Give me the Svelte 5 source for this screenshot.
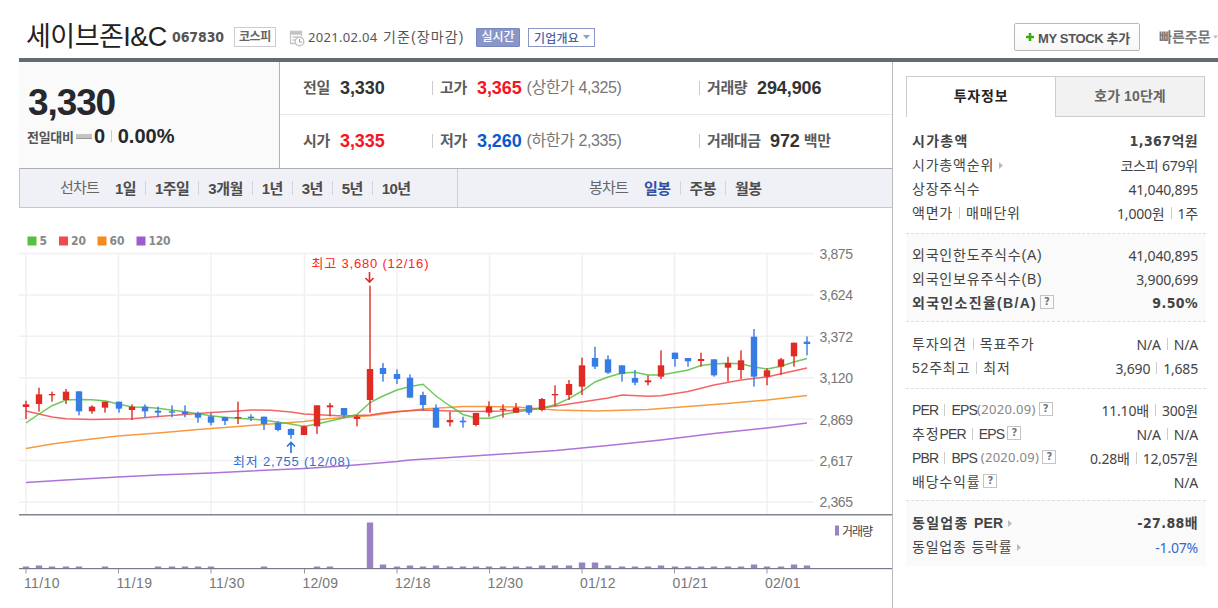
<script lang="ts">
	type Range = { label: string; active?: boolean };
	type Row = {
		label: string[];
		value: string[];
		note?: string;
		help?: boolean;
		arrow?: boolean;
		strong?: boolean;
		down?: boolean;
	};
	type Group = { shaded: boolean; top: number; bottom: number; rows: Row[] };

	const lineRanges = ['1일', '1주일', '3개월', '1년', '3년', '5년', '10년'];
	const candleRanges: Range[] = [
		{ label: '일봉', active: true },
		{ label: '주봉' },
		{ label: '월봉' },
	];

	const groups: Group[] = [
		{
			shaded: false,
			top: 12,
			bottom: 8,
			rows: [
				{ label: ['시가총액'], value: ['1,367억원'], strong: true },
				{ label: ['시가총액순위'], value: ['코스피 679위'], arrow: true },
				{ label: ['상장주식수'], value: ['41,040,895'] },
				{ label: ['액면가', '매매단위'], value: ['1,000원', '1주'] },
			],
		},
		{
			shaded: true,
			top: 9,
			bottom: 6,
			rows: [
				{ label: ['외국인한도주식수(A)'], value: ['41,040,895'] },
				{ label: ['외국인보유주식수(B)'], value: ['3,900,699'] },
				{ label: ['외국인소진율(B/A)'], value: ['9.50%'], help: true, strong: true },
			],
		},
		{
			shaded: false,
			top: 10,
			bottom: 8,
			rows: [
				{ label: ['투자의견', '목표주가'], value: ['N/A', 'N/A'] },
				{ label: ['52주최고', '최저'], value: ['3,690', '1,685'] },
			],
		},
		{
			shaded: false,
			top: 9,
			bottom: 6,
			rows: [
				{ label: ['PER', 'EPS'], value: ['11.10배', '300원'], note: '(2020.09)', help: true },
				{ label: ['추정PER', 'EPS'], value: ['N/A', 'N/A'], help: true },
				{ label: ['PBR', 'BPS'], value: ['0.28배', '12,057원'], note: ' (2020.09)', help: true },
				{ label: ['배당수익률'], value: ['N/A'], help: true },
			],
		},
		{
			shaded: true,
			top: 10,
			bottom: 7,
			rows: [
				{ label: ['동일업종 PER'], value: ['-27.88배'], arrow: true, strong: true },
				{ label: ['동일업종 등락률'], value: ['-1.07%'], arrow: true, down: true },
			],
		},
	];

	// high, body top, body bottom, low (thirds of a pixel below the chart origin), 1 = up
	const candles = [
		[527, 538, 546, 582, 1], [488, 508, 537, 560, 1], [500, 507, 511, 530, 1], [492, 500, 525, 537, 1],
		[499, 499, 559, 571, 0], [541, 545, 559, 566, 1], [530, 530, 548, 563, 1], [530, 530, 551, 563, 0],
		[538, 545, 555, 585, 1], [538, 545, 559, 577, 0], [545, 557, 563, 577, 0], [541, 559, 563, 577, 0],
		[541, 560, 567, 577, 0], [560, 564, 578, 593, 0], [563, 574, 593, 601, 0], [575, 576, 588, 600, 0],
		[530, 576, 580, 597, 1], [568, 575, 579, 588, 0], [575, 575, 597, 615, 0], [589, 593, 615, 619, 0],
		[610, 612, 630, 641, 0], [601, 604, 630, 630, 1], [541, 541, 604, 627, 1], [534, 541, 547, 574, 1],
		[549, 549, 570, 577, 0], [570, 575, 582, 604, 1], [182, 432, 525, 563, 1], [414, 429, 447, 470, 0],
		[433, 447, 462, 477, 0], [448, 458, 518, 518, 0], [500, 510, 540, 558, 0], [538, 549, 608, 608, 0],
		[560, 585, 592, 604, 1], [575, 587, 592, 608, 0], [564, 564, 600, 604, 1], [529, 545, 563, 575, 1],
		[538, 551, 555, 578, 1], [534, 548, 563, 563, 1], [541, 541, 563, 570, 0], [519, 522, 555, 559, 1],
		[481, 507, 511, 543, 1], [465, 477, 510, 525, 1], [398, 421, 485, 510, 1], [365, 399, 425, 432, 0],
		[391, 403, 443, 447, 0], [421, 421, 447, 470, 0], [435, 459, 473, 481, 0], [451, 466, 472, 481, 1],
		[376, 421, 455, 462, 1], [383, 383, 402, 425, 0], [399, 399, 409, 425, 0], [383, 402, 408, 425, 1],
		[403, 403, 451, 455, 0], [395, 414, 428, 470, 1], [376, 406, 435, 462, 1], [312, 335, 455, 485, 0],
		[430, 436, 455, 481, 1], [399, 403, 425, 450, 1], [353, 353, 394, 425, 1], [334, 350, 357, 391, 0],
	];

	const volumes = [
		2, 3, 2, 2, 2, 0, 2, 0, 0, 0, 2, 2, 2, 2, 2, 0, 0, 0, 2, 0,
		0, 0, 2, 2, 0, 0, 46, 4, 2, 3, 2, 3, 2, 2, 2, 2, 2, 2, 2, 3,
		3, 3, 6, 6, 3, 2, 2, 2, 3, 2, 2, 2, 2, 2, 2, 4, 2, 2, 4, 3,
	];

	const averages = [
		{
			days: 120,
			color: '#a05bd0',
			points:
				'26,482.5 66,480 118,477 158,475 211,473 251,471 304,468.5 343,466 397,461.5 410,460 450,457.5 503,454 556,450.5 608,445.5 661,440 714,433.5 767,428 807,423',
		},
		{
			days: 60,
			color: '#f58a1f',
			points:
				'26,448.5 52,444 79,440.5 118,436 158,433 198,429.5 238,426.5 264,424.5 304,421.5 330,418.5 370,415.8 397,412 423,409 463,406.5 490,406.5 516,407 556,410 595,411 648,409.5 688,406.5 727,403.5 767,400 807,395.5',
		},
		{
			days: 20,
			color: '#f04a4a',
			points:
				'26,411 39,414 52,417 66,418.7 92,419.5 132,418.7 158,416.5 185,414.5 211,412.5 238,411 251,410 271,410.2 291,412 304,414 343,416 357,415.5 370,415 383,413 397,411.5 423,410 450,411 476,411.5 503,411 530,409.5 556,406 582,402 608,398 622,395 648,396.2 661,395.7 688,391.5 714,385 741,380 767,377 780,374 807,368',
		},
		{
			days: 5,
			color: '#56c040',
			points:
				'26,423 39,414 52,405.7 66,400 79,399.5 92,399.7 106,401 118,404 132,407 145,407.3 158,408.3 171,410 185,411.7 198,413.7 211,415.7 224,417.3 238,418.3 251,419 264,420.3 277,422 291,424 304,426.5 317,424 330,421 343,418 357,414.5 370,402.5 383,396 397,390 410,386.5 423,384.3 436,396 450,406 463,414.5 476,418 490,418.3 503,414.5 516,412 530,410 542,408 556,404.5 569,398.7 582,391 595,382 608,377 622,373 635,372.3 648,375 661,375 675,372.5 688,370 701,365.5 714,364 727,363.3 741,363.8 754,367 767,369 780,366.5 794,362 807,358.5',
		},
	];

	const legend = [
		{ days: 5, x: 27.5, color: '#56c040', width: 8 },
		{ days: 20, x: 59, color: '#f04a4a', width: 15 },
		{ days: 60, x: 97.5, color: '#f58a1f', width: 15 },
		{ days: 120, x: 136.5, color: '#a05bd0', width: 22 },
	];

	const prices = ['3,875', '3,624', '3,372', '3,120', '2,869', '2,617', '2,365'];
	const dates = ['11/10', '11/19', '11/30', '12/09', '12/18', '12/30', '01/12', '01/21', '02/01'];

	const gridY = (i: number) => 253.5 + i * 41.4;
	const gridX = (i: number) => [26, 118.5, 211, 304.5, 397, 489.5, 582, 674.5, 767][i];
	const slot = (i: number) => Math.round(26 + i * 13.237);
	const py = (v: number) => 225 + v / 3;

	// split off ratio names (PER, EPS, ...) so they can be set tighter than the Hangul
	const runs = (s: string) => s.split(/([A-Z]{3})/).filter(Boolean);
	const isLatin = (s: string) => /^[A-Z]{3}$/.test(s);
</script>

<div class="page">
	<header>
		<h1>세이브존I&amp;C</h1>
		<span class="code">067830</span>
		<span class="market">코스피</span>
		<svg class="clock" width="16" height="17" viewBox="0 0 16 17" fill="none" stroke="#c4c4c4">
			<path d="M7 13.5H1.5V1.5h11v5M1.5 4h11M3.500 7h6M3.500 10h3" stroke-width="1.3" />
			<path d="M2 3h10" stroke-width="2" />
			<circle cx="10.500" cy="11.500" r="4.300" fill="#fff" stroke-width="1.5" />
			<path d="M10.500 9v3h2.500" stroke="#999" />
		</svg>
		<span class="date">2021.02.04</span>
		<span class="basis">기준(장마감)</span>
		<span class="realtime">실시간</span>
		<button class="overview" type="button">
			기업개요<svg width="7" height="4" viewBox="0 0 7 4"><path d="M0 0h7L3.500 4z" fill="#8d9dcb" /></svg>
		</button>
		<button class="mystock" type="button">
			<svg width="8" height="8" viewBox="0 0 8 8"><path d="M4 0v8M0 4h8" stroke="#35ad12" stroke-width="2.600" /></svg>
			<span>MY STOCK 추가</span>
		</button>
		<span class="order">빠른주문</span>
		<svg class="order-arrow" width="7" height="4" viewBox="0 0 7 4"><path d="M0 0h7L3.500 4z" fill="#bbb" /></svg>
	</header>

	<div class="body">
		<main>
			<section class="quote">
				<div class="today">
					<strong>3,330</strong>
					<div class="change">
						<span class="vs">전일대비</span>
						<i class="flat"></i>
						<b>0</b>
						<i class="bar"></i>
						<b class="rate">0.00%</b>
					</div>
				</div>
				<div class="detail">
					<div class="line">
						<div class="cell first"><em>전일</em><b>3,330</b></div>
						<div class="cell mid"><em>고가</em><b class="up">3,365</b><small>(상한가 4,325)</small></div>
						<div class="cell"><em>거래량</em><b>294,906</b></div>
					</div>
					<div class="line">
						<div class="cell first"><em>시가</em><b class="up">3,335</b></div>
						<div class="cell mid"><em>저가</em><b class="down">3,260</b><small>(하한가 2,335)</small></div>
						<div class="cell"><em class="amount">거래대금</em><b>972</b><em class="unit">백만</em></div>
					</div>
				</div>
			</section>

			<nav>
				<div class="ranges line-chart">
					<span class="caption">선차트</span>
					<ul>
						{#each lineRanges as range}
							<li>{range}</li>
						{/each}
					</ul>
				</div>
				<div class="ranges candle-chart">
					<span class="caption">봉차트</span>
					<ul>
						{#each candleRanges as range}
							<li class:active={range.active}>{range.label}</li>
						{/each}
					</ul>
				</div>
			</nav>

			<svg class="chart" width="873" height="400" viewBox="19 208 873 400">
				{#each legend as item}
					<rect x={item.x} y="236.500" width="9" height="9" fill={item.color} />
					<text class="legend" x={item.x + 12} y="245.300" textLength={item.width}>{item.days}</text>
				{/each}

				<g stroke="#f0f0f0" stroke-width="1.500">
					{#each prices as _, i}
						<path d="M19 {gridY(i)}H814" />
					{/each}
					{#each dates as _, i}
						<path d="M{gridX(i)} 253V514" />
					{/each}
				</g>

				{#each averages as line}
					<polyline points={line.points} fill="none" stroke={line.color} stroke-width="1.500" stroke-opacity="0.850" />
				{/each}

				{#each candles as [high, top, bottom, low, up], i}
					<g fill={up ? '#e02b24' : '#377be4'}>
						<rect x={slot(i) - 0.7} y={py(high)} width="1.400" height={(low - high) / 3} />
						<rect x={slot(i) - 3.2} y={py(top)} width="6.400" height={(bottom - top) / 3} />
					</g>
				{/each}

				<text class="mark" x="311.500" y="267.500" textLength="117" fill="#f22">최고 3,680 (12/16)</text>
				<path d="M369.500 272v9.500M365.500 278l4 4 4-4" stroke="#e02b24" stroke-width="1.600" fill="none" />
				<text class="mark" x="233" y="466" textLength="117" fill="#2673d6">최저 2,755 (12/08)</text>
				<path d="M291 453v-10M287 446.500l4-4 4 4" stroke="#2673d6" stroke-width="1.600" fill="none" />

				{#each prices as price, i}
					<text class="axis" x="819.500" y={gridY(i) + 5.5} textLength="33.500">{price}</text>
				{/each}

				<rect x="19" y="514" width="873" height="1.500" fill="#80848c" />
				{#each volumes as v, i}
					{#if v}
						<rect x={slot(i) - 3.2} y={568.5 - v} width="6.400" height={v} fill="#9a81c3" />
					{/if}
				{/each}
				<rect x="19" y="568" width="873" height="1.200" fill="#777a88" />
				{#each dates as date, i}
					<path d="M{gridX(i)} 569v4.500" stroke="#999" />
					<text class="axis" x={gridX(i) - 2} y="587.500" textLength="35.500">{date}</text>
				{/each}
				<rect x="835" y="525.500" width="4" height="10" fill="#9a81c3" />
				<text class="volume" x="842" y="535.500" textLength="31">거래량</text>
			</svg>
		</main>

		<aside>
			<div class="tabs">
				<div class="tab current">투자정보</div>
				<div class="tab">호가 10단계</div>
			</div>
			{#each groups as group}
				<div
					class="group"
					class:shaded={group.shaded}
					style="padding-top: {group.top}px; padding-bottom: {group.bottom}px"
				>
					{#each group.rows as row}
						<div class="row" class:strong={row.strong} class:down={row.down}>
							<div class="label">
								{#each row.label as part, i}
									{#if i > 0}<i class="bar"></i>{/if}<span>{#each runs(part) as run}<span class:latin={isLatin(run)}>{run}</span>{/each}</span>
								{/each}
								{#if row.note}<span class="note">{row.note}</span>{/if}
								{#if row.help}<span class="help">?</span>{/if}
								{#if row.arrow}
									<svg width="4" height="7" viewBox="0 0 4 7"><path d="M0 0l4 3.500L0 7z" fill="#bbb" /></svg>
								{/if}
							</div>
							<div class="value">
								{#each row.value as part, i}
									{#if i > 0}<i class="bar"></i>{/if}<span>{part}</span>
								{/each}
							</div>
						</div>
					{/each}
				</div>
			{/each}
		</aside>
	</div>
</div>

<style>
	:global(body) {
		background: #fff;
		overflow: hidden;
	}

	.page {
		width: 1218px;
		height: 608px;
		overflow: hidden;
		box-sizing: border-box;
		padding-left: 19px;
		font-family: 'Liberation Sans', 'Noto Sans CJK KR', sans-serif;
		color: #444;
		white-space: nowrap;
	}

	.page :global(*) {
		box-sizing: border-box;
	}

	header {
		display: flex;
		align-items: center;
		height: 62px;
		padding: 16px 0 0 7px;
		border-bottom: 4px solid #646a75;
	}

	h1 {
		width: 146px;
		margin: 0;
		font-size: 27px;
		font-weight: 400;
		line-height: 30px;
		letter-spacing: -0.5px;
		color: #222;
	}

	.code {
		width: 62px;
		font: 700 14px/20px 'DejaVu Sans Condensed', 'DejaVu Sans', sans-serif;
		letter-spacing: -0.1px;
		color: #555;
	}

	.market {
		width: 42px;
		height: 20px;
		border: 1px solid #ccc;
		font-size: 12px;
		font-weight: 700;
		line-height: 18px;
		letter-spacing: -0.3px;
		text-align: center;
		color: #666;
	}

	.clock {
		margin: 3px 3px 0 13px;
	}

	.date {
		width: 75px;
		font: 13px/20px 'Noto Sans', sans-serif;
		letter-spacing: 0.3px;
		color: #555;
	}

	.basis {
		width: 93px;
		font-size: 14px;
		line-height: 20px;
		letter-spacing: 1.1px;
		color: #555;
	}

	.realtime {
		width: 44px;
		height: 19px;
		margin-right: 8px;
		border: 1px solid #7787bd;
		border-radius: 1px;
		background: #8996c8;
		font-size: 12px;
		font-weight: 500;
		line-height: 17px;
		text-align: center;
		color: #fff;
	}

	button {
		display: flex;
		align-items: center;
		padding: 0;
		font-family: inherit;
		white-space: nowrap;
	}

	.overview {
		gap: 4px;
		width: 67px;
		height: 19px;
		padding-left: 5px;
		border: 1px solid #8997c8;
		background: #fff;
		font-size: 12px;
		font-weight: 500;
		letter-spacing: 0.2px;
		color: #4a5fa8;
	}

	.mystock {
		gap: 4px;
		width: 126px;
		height: 28px;
		margin: 0 19px 0 auto;
		padding-left: 11px;
		border: 1px solid #b8b8b8;
		border-radius: 2px;
		background: linear-gradient(#fff, #f7f7f7);
		font-size: 13px;
		font-weight: 700;
		letter-spacing: -0.35px;
		color: #555;
	}

	.order {
		width: 54px;
		font-size: 14px;
		font-weight: 700;
		line-height: 20px;
		color: #777;
	}

	.order-arrow {
		flex-shrink: 0;
		width: 5px;
	}

	.body {
		display: flex;
		height: 546px;
	}

	main {
		width: 874px;
		border-right: 1px solid #bbb;
	}

	.quote {
		display: flex;
		height: 106px;
	}

	.today {
		width: 261px;
		padding: 19px 0 0 8px;
		border-right: 1px solid #b0b2b8;
		background: #fafafa;
		color: #26282b;
	}

	.today strong {
		display: block;
		padding-left: 1px;
		font-size: 37px;
		line-height: 44px;
		letter-spacing: -1.1px;
	}

	.change {
		display: flex;
		align-items: center;
		height: 22px;
	}

	.vs {
		width: 49px;
		font-size: 13px;
		font-weight: 700;
		letter-spacing: -0.3px;
		color: #555;
	}

	.flat {
		width: 16px;
		height: 5px;
		margin-right: 2px;
		border-bottom: 1px solid #999;
		background: #c3c3c3;
	}

	.change b {
		font-size: 20px;
		letter-spacing: -0.4px;
	}

	.change .rate {
		letter-spacing: 0;
	}

	.bar {
		flex-shrink: 0;
		width: 1px;
		height: 12px;
		margin: 0 6px;
		background: #ccc;
	}

	.detail {
		flex: 1;
	}

	.line {
		display: flex;
		align-items: center;
		height: 52px;
	}

	.line + .line {
		height: 53px;
		border-top: 1px solid #e8e8e8;
	}

	.cell {
		display: flex;
		align-items: center;
		height: 14px;
		padding-left: 7px;
		border-left: 1px solid #ccc;
		line-height: 20px;
	}

	.cell.first {
		width: 152px;
		padding-left: 22px;
		border-color: transparent;
	}

	.cell.mid {
		width: 267px;
	}

	.cell em {
		width: 37px;
		font-size: 15px;
		font-style: normal;
		font-weight: 700;
		letter-spacing: -0.4px;
		color: #5c5c5c;
	}

	.cell:last-child em {
		width: 50px;
	}

	.cell em.amount {
		width: 63px;
	}

	.cell:last-child em.unit {
		width: auto;
		margin-left: 4px;
	}

	.cell b {
		font-size: 18px;
		letter-spacing: -0.1px;
		color: #333;
	}

	.cell b.up {
		color: #f81420;
	}

	.cell b.down {
		color: #0a59d2;
	}

	.cell small {
		margin-left: 5px;
		font-size: 16px;
		letter-spacing: -0.4px;
		color: #777;
	}

	nav {
		display: flex;
		height: 40px;
		border: 1px solid #c5c7ce;
		border-top-color: #aaadb3;
		border-right: 0;
		background: #f0f1f6;
	}

	.ranges {
		display: flex;
		align-items: center;
	}

	.line-chart {
		width: 438px;
		padding-left: 40px;
		border-right: 1px solid #cccfd8;
	}

	.candle-chart {
		padding-left: 131px;
	}

	.caption {
		width: 46px;
		font-size: 15px;
		line-height: 20px;
		letter-spacing: -0.8px;
		color: #666;
	}

	ul {
		display: flex;
		margin: 0;
		padding: 0;
		list-style: none;
	}

	li {
		height: 14px;
		padding: 0 9px;
		border-left: 1px solid #d2d4da;
		font-size: 15px;
		font-weight: 700;
		line-height: 15px;
		letter-spacing: -0.55px;
		color: #4c4c4c;
	}

	li:first-child {
		border-left: 0;
	}

	li.active {
		color: #334fa4;
	}

	.chart {
		display: block;
	}

	.legend {
		font: 700 12px 'DejaVu Sans Condensed', 'DejaVu Sans', sans-serif;
		fill: #888;
	}

	.mark {
		font: 13px 'Liberation Sans', 'Noto Sans CJK KR', sans-serif;
	}

	.axis {
		font: 14px 'Liberation Sans', sans-serif;
		fill: #777;
	}

	.volume {
		font: 12px 'Noto Sans CJK KR', sans-serif;
		fill: #444;
	}

	aside {
		width: 325px;
		padding: 14px 12px 0 13px;
	}

	.tabs {
		display: flex;
		width: 299px;
		height: 41px;
	}

	.tab {
		width: 150px;
		border: 1px solid #ccc;
		background: #f2f2f2;
		font-size: 14px;
		font-weight: 700;
		line-height: 39px;
		letter-spacing: 0.1px;
		text-align: center;
		color: #666;
	}

	.tab.current {
		width: 149px;
		border-right: 0;
		border-bottom: 0;
		background: #fff;
		letter-spacing: 0.8px;
		color: #222;
	}

	.group + .group {
		border-top: 1px dashed #ddd;
	}

	.group {
		width: 300px;
	}

	.shaded {
		background: #fafafa;
	}

	.row {
		display: flex;
		justify-content: space-between;
		height: 24px;
		padding: 0 8px 0 6px;
		line-height: 23px;
	}

	.label,
	.value {
		display: flex;
		align-items: center;
	}

	.label {
		font-size: 14px;
		letter-spacing: 0.8px;
	}

	.label .latin {
		letter-spacing: -0.8px;
	}

	.strong .latin {
		letter-spacing: 0.2px;
	}

	.value {
		font-family: 'Noto Sans', 'Noto Sans CJK KR', sans-serif;
		font-size: 14px;
		letter-spacing: -0.2px;
	}

	.strong {
		font-weight: 700;
	}

	.strong .label {
		letter-spacing: 1.3px;
	}

	.strong .value {
		font-family: 'DejaVu Sans Condensed', 'Noto Sans CJK KR', sans-serif;
		font-size: 14px;
		letter-spacing: 0.4px;
	}

	.down .value {
		color: #3568cc;
	}

	.note {
		padding-bottom: 2px;
		font-family: 'Noto Sans', sans-serif;
		font-size: 13px;
		letter-spacing: 0.3px;
		white-space: pre;
		color: #888;
	}

	.help {
		width: 14px;
		height: 14px;
		margin: 0 0 2px 3px;
		border: 1px solid #c4c4c4;
		font: 700 10px/12px 'DejaVu Sans', sans-serif;
		letter-spacing: 0;
		text-align: center;
		color: #687888;
	}

	.label svg {
		margin-left: 5px;
	}
</style>
